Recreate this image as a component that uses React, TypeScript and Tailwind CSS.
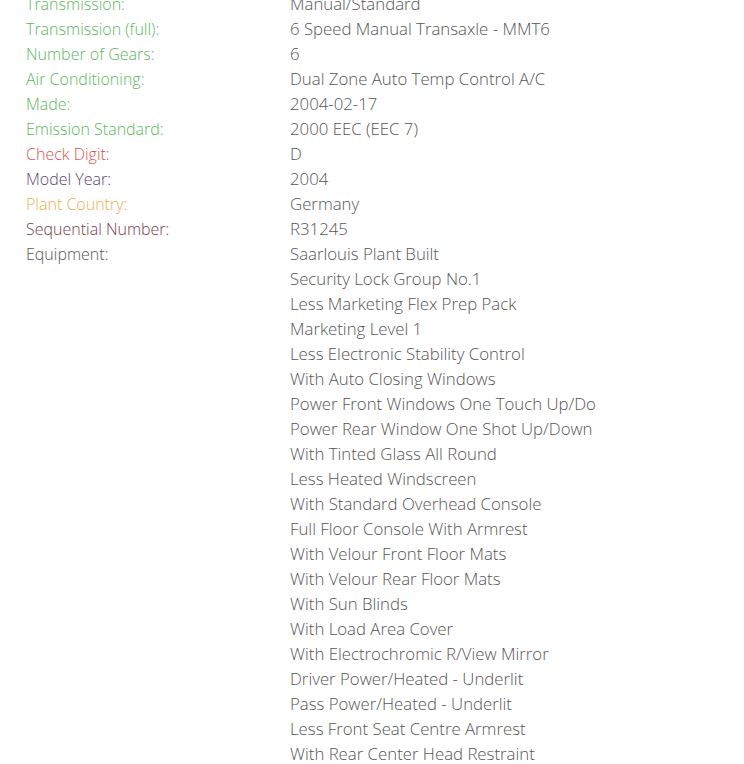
type Row = {
  label: string;
  value: string;
  color: string;
};

const rows: Row[] = [
  { label: 'Transmission:', value: 'Manual/Standard', color: 'text-[#5cb85c]' },
  { label: 'Transmission (full):', value: '6 Speed Manual Transaxle - MMT6', color: 'text-[#5cb85c]' },
  { label: 'Number of Gears:', value: '6', color: 'text-[#5cb85c]' },
  { label: 'Air Conditioning:', value: 'Dual Zone Auto Temp Control A/C', color: 'text-[#5cb85c]' },
  { label: 'Made:', value: '2004-02-17', color: 'text-[#5cb85c]' },
  { label: 'Emission Standard:', value: '2000 EEC (EEC 7)', color: 'text-[#5cb85c]' },
  { label: 'Check Digit:', value: 'D', color: 'text-[#d9534f]' },
  { label: 'Model Year:', value: '2004', color: 'text-[#5f3f78]' },
  { label: 'Plant Country:', value: 'Germany', color: 'text-[#f0ad4e]' },
  { label: 'Sequential Number:', value: 'R31245', color: 'text-[#763a4c]' },
];

const equipment = [
  'Saarlouis Plant Built',
  'Security Lock Group No.1',
  'Less Marketing Flex Prep Pack',
  'Marketing Level 1',
  'Less Electronic Stability Control',
  'With Auto Closing Windows',
  'Power Front Windows One Touch Up/Down',
  'Power Rear Window One Shot Up/Down',
  'With Tinted Glass All Round',
  'Less Heated Windscreen',
  'With Standard Overhead Console',
  'Full Floor Console With Armrest',
  'With Velour Front Floor Mats',
  'With Velour Rear Floor Mats',
  'With Sun Blinds',
  'With Load Area Cover',
  'With Electrochromic R/View Mirror',
  'Driver Power/Heated - Underlit',
  'Pass Power/Heated - Underlit',
  'Less Front Seat Centre Armrest',
  'With Rear Center Head Restraint',
];

function SpecRow({ label, value, color }: { label: string; value: string; color: string }) {
  return (
    <div className="flex h-[25px] items-center">
      <div className={`w-[290px] shrink-0 pl-[26px] pt-[2px] text-[16px] ${color}`}>{label}</div>
      <div className="w-[306px] overflow-hidden whitespace-nowrap text-[16.8px] text-[#555555]">
        {value}
      </div>
    </div>
  );
}

export default function App() {
  return (
    <div className="h-[764px] w-[744px] overflow-hidden bg-white">
      <div
        className="-mt-[9px] font-light leading-[25px]"
        style={{ fontFamily: '"Open Sans", "Noto Sans", sans-serif' }}
      >
        {rows.map((row) => (
          <SpecRow key={row.label} {...row} />
        ))}
        {equipment.map((item, i) => (
          <SpecRow
            key={item}
            label={i === 0 ? 'Equipment:' : ''}
            value={item}
            color="text-[#555555]"
          />
        ))}
      </div>
    </div>
  );
}
